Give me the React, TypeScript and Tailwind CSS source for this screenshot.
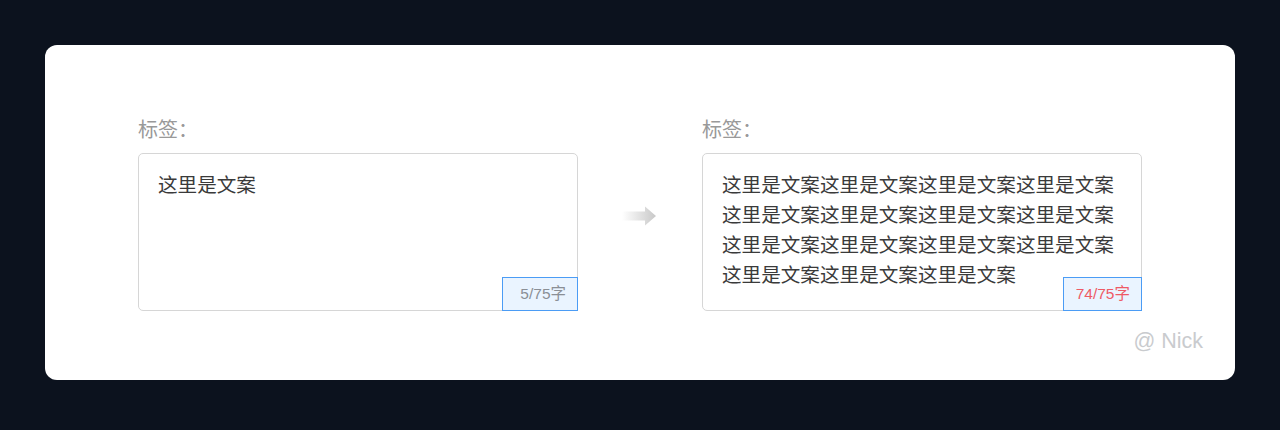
import React from "react";

const font = { fontFamily: '"Liberation Sans", "Noto Sans CJK SC", sans-serif' };

function Field({ text, count, red, badgeW }: { text: string; count: string; red?: boolean; badgeW: string }) {
  return (
    <div className="flex flex-col w-[440px]">
      <div className="text-[20px] leading-[28px] text-[#999999] h-[28px]">标签：</div>
      <div className="relative mt-[9px] h-[158px] w-[440px] rounded-[5px] border border-[#d6d6d6] bg-white pl-[19px] pr-[24px] pt-[16px]">
        <p className="text-[19.6px] leading-[30px] text-[#3a3a3a] break-all">{text}</p>
        <div
          className={`absolute -right-px -bottom-px h-[34px] ${badgeW} border border-[#4b9cf5] bg-[#eaf4ff] flex items-center justify-end pr-[11px] text-[15.5px] ${red ? "text-[#ee5a66]" : "text-[#8a8f96]"}`}
        >
          {count}
        </div>
      </div>
    </div>
  );
}

export default function App() {
  const long = "这里是文案".repeat(15);
  return (
    <div className="w-[1280px] h-[430px] bg-[#0c121e] pt-[45px] pl-[45px]" style={font}>
      <div className="relative w-[1190px] h-[335px] rounded-[12px] bg-white flex items-start pl-[93px] pt-[71px]">
        <Field text="这里是文案" count="5/75字" badgeW="w-[76px]" />
        <div className="w-[124px] flex justify-center pt-[90px]">
          <svg width="36" height="20" viewBox="0 0 36 20">
            <defs>
              <linearGradient id="ag" x1="0" y1="0" x2="1" y2="0">
                <stop offset="0" stopColor="#ffffff" />
                <stop offset="1" stopColor="#c8c8c8" />
              </linearGradient>
            </defs>
            <path d="M0 5.5 H23 V0.5 L34 10 L23 19.5 V14.5 H0 Z" fill="url(#ag)" />
          </svg>
        </div>
        <Field text={long} count="74/75字" red badgeW="w-[79px]" />
        <div className="absolute right-[32px] bottom-[25px] text-[21.5px] leading-[28px] text-[#c9cbce]">@ Nick</div>
      </div>
    </div>
  );
}
